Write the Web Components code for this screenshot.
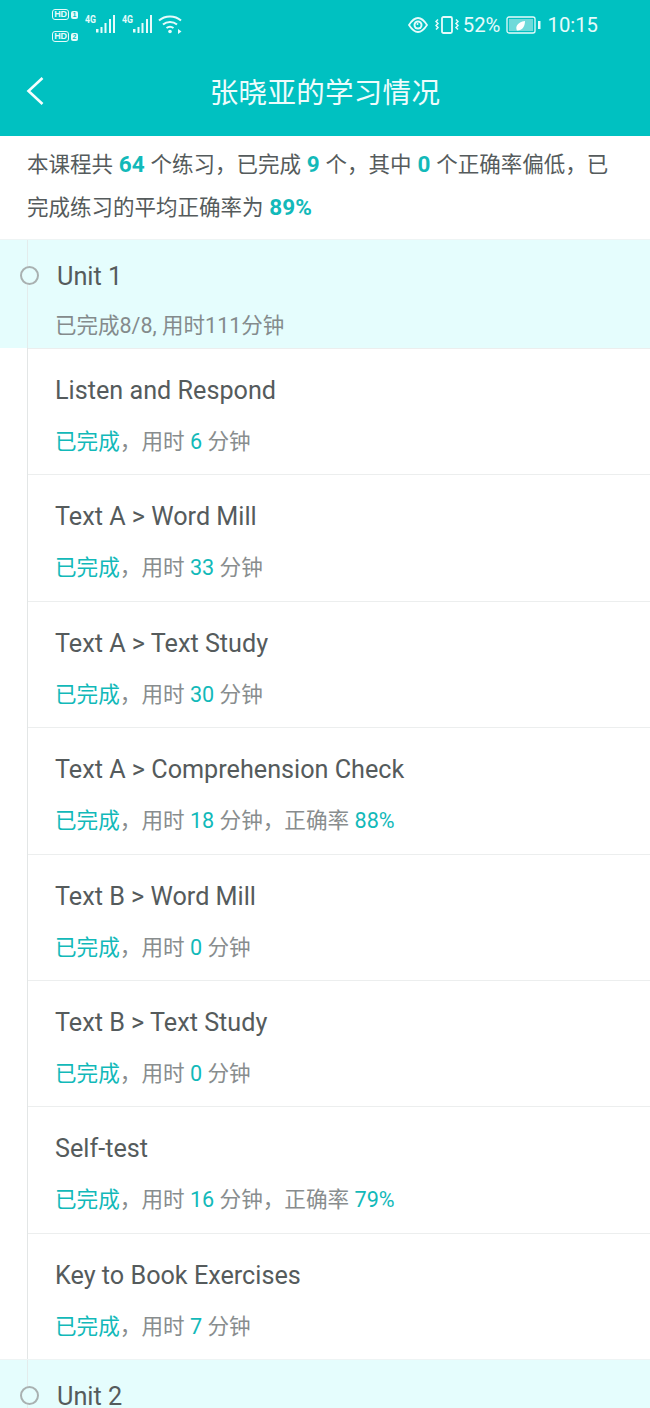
<!DOCTYPE html>
<html>
<head>
<meta charset="utf-8">
<style>
html, body { margin: 0; padding: 0; background: #fff; }
body { width: 650px; height: 1408px; overflow: hidden; font-family: Roboto, "Noto Sans CJK SC", sans-serif; }
</style>
</head>
<body>
<status-bar></status-bar>
<app-bar>张晓亚的学习情况</app-bar>
<course-summary>本课程共 <b>64</b> 个练习，已完成 <b>9</b> 个，其中 <b>0</b> 个正确率偏低，已<br>完成练习的平均正确率为 <b>89%</b></course-summary>
<unit-header name="Unit 1" info="已完成8/8, 用时111分钟"></unit-header>
<lesson-list>
  <lesson-row title="Listen and Respond" mins="6"></lesson-row>
  <lesson-row title="Text A > Word Mill" mins="33"></lesson-row>
  <lesson-row title="Text A > Text Study" mins="30"></lesson-row>
  <lesson-row title="Text A > Comprehension Check" mins="18" rate="88%"></lesson-row>
  <lesson-row title="Text B > Word Mill" mins="0"></lesson-row>
  <lesson-row title="Text B > Text Study" mins="0"></lesson-row>
  <lesson-row title="Self-test" mins="16" rate="79%"></lesson-row>
  <lesson-row title="Key to Book Exercises" mins="7"></lesson-row>
</lesson-list>
<unit-header name="Unit 2"></unit-header>
<script>
const signal = `
    <svg width="37" height="28" viewBox="0 0 37 28" fill="#e6fbfb">
        <text x="0" y="15" font-size="11" font-weight="700" font-family="Roboto" textLength="11" lengthAdjust="spacingAndGlyphs">4G</text>
        <rect x="11" y="21" width="2.500" height="3.500"/><rect x="15.500" y="19" width="2" height="6"/><rect x="19.500" y="15" width="2" height="10"/><rect x="24" y="11" width="2" height="14"/><rect x="28" y="7" width="2" height="18"/>
    </svg>`;

class StatusBar extends HTMLElement {
    constructor(){
        super();
        this.attachShadow({mode: "open"});
    }
    connectedCallback(){
        this.shadowRoot.innerHTML = `
        <style>
            :host { display: flex; height: 49px; background: #00c1c1; color: #e6fbfb; box-sizing: border-box; padding: 0 52px; justify-content: space-between; align-items: flex-start; }
            .left, .right { display: flex; align-items: center; }
            .left { padding-top: 8px; align-items: flex-start; }
            .hd { display: flex; flex-direction: column; gap: 11px; width: 33px; margin-top: 1px; }
            .hd div { display: flex; align-items: center; gap: 2px; height: 11px; }
            .hd i { font: 700 9px/9px "Liberation Sans", sans-serif; font-style: normal; border: 1.500px solid #e6fbfb; border-radius: 3px; color: #e6fbfb; width: 17px; height: 11px; box-sizing: border-box; text-align: center; letter-spacing: -.3px; }
            .hd span { font: 700 7px/8px "Liberation Sans", sans-serif; background: #e6fbfb; color: #00c1c1; border-radius: 2px; width: 7px; height: 8px; text-align: center; }
            .right { font: 400 20.300px/24px Roboto, sans-serif; padding-top: 13px; }
            .pct { margin: 0 6px 0 4px; }
        </style>
        <div class="left">
            <div class="hd"><div><i>HD</i><span>1</span></div><div><i>HD</i><span>2</span></div></div>
            ${signal}${signal}
            <svg width="26" height="22" viewBox="0 0 26 22" fill="none" stroke="#e6fbfb" stroke-width="2" style="margin:6px 0 0 -1px">
                <path d="M1 6.500C7 1 17 1 23 6.500"/><path d="M5 10.500C9 7 15 7 19 10.500"/><path d="M8.500 14C10.500 12.500 13.500 12.500 15.500 14"/>
                <circle cx="12" cy="17.500" r="1.800" fill="#e6fbfb" stroke="none"/><path d="M20 15l3.500 2.500-3.500 2.500z" fill="#e6fbfb" stroke="none"/>
            </svg>
        </div>
        <div class="right">
            <svg width="20" height="16" viewBox="0 0 20 16" fill="none" stroke="#e6fbfb" stroke-width="1.800" style="margin-right:7px">
                <path d="M1 8C4.500 2.500 7.500 1 10 1s5.500 1.500 9 7c-3.500 5.500-6.500 7-9 7s-5.500-1.500-9-7z"/><circle cx="10" cy="8" r="4.500" fill="#e6fbfb" stroke="none"/><circle cx="10" cy="8" r="2.500" fill="#00c1c1" stroke="none"/><circle cx="9.500" cy="7" r="1" fill="#e6fbfb" stroke="none"/>
            </svg>
            <svg width="24" height="18" viewBox="0 0 24 18" fill="none" stroke="#e6fbfb" stroke-width="1.800">
                <rect x="7" y="1" width="10" height="16" rx="1.500"/>
                <path d="M3 3.500l-2 2 2 2-2 2 2 2-2 2M21 3.500l2 2-2 2 2 2-2 2 2 2" stroke-width="1.500"/>
            </svg>
            <span class="pct">52%</span>
            <svg width="35" height="18" viewBox="0 0 35 18" style="margin-right:6px">
                <rect x="1" y="1" width="28" height="16" rx="2" fill="none" stroke="#e6fbfb" stroke-width="1.300"/>
                <rect x="3" y="3" width="24" height="12" fill="#6fdada"/>
                <rect x="32" y="5" width="2.500" height="8" fill="#e6fbfb"/>
                <path d="M11 14.500c-2-3 0-8.500 8-9.500 0 6-3.500 10-8 9.500z" fill="#fff"/>
            </svg>
            <span>10:15</span>
        </div>`;
    }
}
customElements.define('status-bar', StatusBar);

class AppBar extends HTMLElement {
    constructor(){
        super();
        this.attachShadow({mode: "open"});
    }
    connectedCallback(){
        this.shadowRoot.innerHTML = `
        <style>
            :host { display: flex; position: relative; height: 87px; background: #00c1c1; color: #eefcfc; align-items: center; justify-content: center; }
            .back { position: absolute; left: 26px; top: 27px; display: block; }
            h1 { margin: -3px 0 0 0; font: 400 28.500px/34px "Noto Sans CJK SC", sans-serif; letter-spacing: .3px; }
        </style>
        <svg class="back" width="19" height="30" viewBox="0 0 19 30" fill="none" stroke="#f4fefe" stroke-width="2.600"><path d="M16.500 2L2.500 15l14 13"/></svg>
        <h1><slot></slot></h1>`;
    }
}
customElements.define('app-bar', AppBar);

class CourseSummary extends HTMLElement {
    constructor(){
        super();
        this.attachShadow({mode: "open"});
    }
    connectedCallback(){
        this.shadowRoot.innerHTML = `
        <style>
            :host { display: block; height: 103px; box-sizing: border-box; padding: 7px 27px 0 27px; font: 400 21.500px/43px Roboto, "Noto Sans CJK SC", sans-serif; word-spacing: .5px; color: #555b5c; }
            ::slotted(b) { color: #12b9b9; font-size: 22.500px; }
        </style>
        <slot></slot>`;
    }
}
customElements.define('course-summary', CourseSummary);

class UnitHeader extends HTMLElement {
    constructor(){
        super();
        this.attachShadow({mode: "open"});
    }
    connectedCallback(){
        const info = this.getAttribute('info');
        this.shadowRoot.innerHTML = `
        <style>
            :host { display: block; position: relative; height: 109px; box-sizing: border-box; background: #e5fdfd; border-top: 1px solid #eef4f4; padding: 20px 0 0 57px; }
            .dot { position: absolute; left: 20px; top: 26px; width: 19px; height: 19px; box-sizing: border-box; border: 2px solid #a9b1b1; border-radius: 50%; background: #e5fdfd; }
            .rail { position: absolute; left: 27px; top: 0; width: 1px; height: 100%; background: #e3ecec; }
            .name { font: 400 25.300px/34px Roboto, sans-serif; color: #555b5c; }
            .info { margin: 18px 0 0 -2px; font: 400 21.500px/28px Roboto, "Noto Sans CJK SC", sans-serif; color: #848b8c; }
            .info:empty { display: none; }
        </style>
        <div class="rail"></div>
        <div class="dot"></div>
        <div class="name">${this.getAttribute('name')}</div>
        <div class="info">${info || ''}</div>`;
    }
}
customElements.define('unit-header', UnitHeader);

class LessonList extends HTMLElement {
    constructor(){
        super();
        this.attachShadow({mode: "open"});
    }
    connectedCallback(){
        this.shadowRoot.innerHTML = `
        <style>
            :host { display: block; margin-left: 27px; border-left: 1px solid #e3e6e6; }
        </style>
        <slot></slot>`;
    }
}
customElements.define('lesson-list', LessonList);

class LessonRow extends HTMLElement {
    constructor(){
        super();
        this.attachShadow({mode: "open"});
    }
    connectedCallback(){
        const rate = this.getAttribute('rate');
        const rateText = rate ? `，正确率 <em>${rate}</em>` : '';
        this.shadowRoot.innerHTML = `
        <style>
            :host { display: block; height: 126.375px; box-sizing: border-box; border-top: 1px solid #eceeee; padding: 25px 0 0 27px; }
            .title { font: 400 25.200px/34px Roboto, sans-serif; color: #555b5c; }
            .sub { margin-top: 20px; font: 400 21.600px/28px Roboto, "Noto Sans CJK SC", sans-serif; color: #888d8e; }
            em { font-style: normal; color: #12b9b9; }
        </style>
        <div class="title">${this.getAttribute('title').replace('>', '&gt;')}</div>
        <div class="sub"><em>已完成</em>，用时 <em>${this.getAttribute('mins')}</em> 分钟${rateText}</div>`;
    }
}
customElements.define('lesson-row', LessonRow);
</script>
</body>
</html>
